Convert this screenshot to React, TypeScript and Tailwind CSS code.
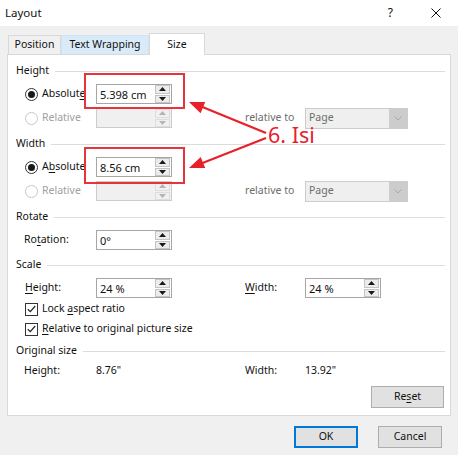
import React from "react";

function Tri({ up, disabled }: { up?: boolean; disabled?: boolean }) {
  return (
    <svg width="7" height="4" viewBox="0 0 7 4">
      <path d={up ? "M0 4 L3.5 0 L7 4 Z" : "M0 0 L3.5 4 L7 0 Z"} fill={disabled ? "#b4b4b4" : "#1a1a1a"} />
    </svg>
  );
}

function Spin({ value, disabled }: { value?: string; disabled?: boolean }) {
  return (
    <div
      className={`flex h-[20px] w-[76px] items-center border ${
        disabled ? "border-[#cccccc] bg-[#f0f0f0]" : "border-[#a6a6a6] bg-white"
      }`}
    >
      <span className="flex-1 pl-[3px] text-[11px] leading-none">{value}</span>
      <div className="mr-px flex h-[18px] w-[15px] flex-col gap-px">
        <div
          className={`grid flex-1 place-items-center border ${
            disabled ? "border-[#dedede] bg-[#f0f0f0]" : "border-[#c4c4c4] bg-[#ececec]"
          }`}
        >
          <Tri up disabled={disabled} />
        </div>
        <div
          className={`grid flex-1 place-items-center border ${
            disabled ? "border-[#dedede] bg-[#f0f0f0]" : "border-[#c4c4c4] bg-[#ececec]"
          }`}
        >
          <Tri disabled={disabled} />
        </div>
      </div>
    </div>
  );
}

function Radio({ checked, disabled }: { checked?: boolean; disabled?: boolean }) {
  return (
    <span
      className={`grid size-[13px] place-items-center rounded-full border bg-white ${
        disabled ? "border-[#c8c8c8]" : "border-[#333333]"
      }`}
    >
      {checked ? <span className="size-[7px] rounded-full bg-[#1a1a1a]" /> : null}
    </span>
  );
}

function Check() {
  return (
    <span className="grid size-[13px] place-items-center border border-[#333333] bg-white">
      <svg width="9" height="8" viewBox="0 0 9 8">
        <path d="M0.8 4.2 L3.3 6.6 L8.2 1" fill="none" stroke="#222" strokeWidth="1.2" />
      </svg>
    </span>
  );
}

function Select() {
  return (
    <div className="flex h-[21px] w-[103px] items-center border border-[#cccccc] bg-[#efefef]">
      <span className="flex-1 pl-[3px] text-[#6d6d6d]">Page</span>
      <div className="grid h-full w-[18px] place-items-center bg-[#cccccc]">
        <svg width="8" height="5" viewBox="0 0 8 5">
          <path d="M0.5 0.5 L4 4 L7.5 0.5" fill="none" stroke="#a8a8a8" strokeWidth="1" />
        </svg>
      </div>
    </div>
  );
}

function Header({ label, className }: { label: string; className: string }) {
  return (
    <div className={`flex h-[16px] items-center pl-[8px] pr-[5px] ${className}`}>
      <span>{label}</span>
      <span className="ml-[6px] h-px flex-1 bg-[#dcdcdc]" />
    </div>
  );
}

function Mn({ children }: { children: React.ReactNode }) {
  return <span className="underline decoration-1 underline-offset-[2px]">{children}</span>;
}

export default function App() {
  return (
    <div className="relative flex h-[455px] w-[458px] flex-col overflow-hidden bg-[#f0f0f0] font-['Noto_Sans',sans-serif] text-[10.5px] text-[#111]">
      {/* title bar */}
      <div className="flex h-[26px] items-center bg-white pl-[5px] pr-[17px]">
        <span className="text-[11.5px]">Layout</span>
        <span className="ml-auto text-[12px]">?</span>
        <svg className="ml-[38px]" width="10" height="10" viewBox="0 0 10 10">
          <path d="M0.5 0.5 L9.5 9.5 M9.5 0.5 L0.5 9.5" stroke="#111" strokeWidth="1" />
        </svg>
      </div>

      {/* tabs */}
      <div className="flex h-[28px] items-end pl-[8px]">
        <div className="flex h-[19px] w-[53px] items-center justify-center border border-b-0 border-[#d9d9d9]">
          Position
        </div>
        <div className="flex h-[19px] w-[88px] items-center justify-center border border-b-0 border-[#cfe3f5] bg-[#d9ebf9]">
          Text Wrapping
        </div>
        <div className="relative z-10 -mb-px flex h-[22px] w-[56px] items-center justify-center border border-b-0 border-[#d9d9d9] bg-white">
          Size
        </div>
      </div>

      {/* panel */}
      <div className="mx-[7px] flex h-[362px] flex-col border border-[#d9d9d9] bg-white pb-[7px]">
        <Header label="Height" className="mt-[8px]" />
        <div className="mt-[4px] flex h-[22px] items-center pl-[17px]">
          <Radio checked />
          <span className="ml-[4px] w-[54px]">
            Absolut<Mn>e</Mn>
          </span>
          <Spin value="5.398 cm" />
        </div>
        <div className="mt-[2px] flex h-[22px] items-center pl-[17px]">
          <Radio disabled />
          <span className="ml-[4px] w-[54px] text-[#a0a0a0]">Relative</span>
          <Spin disabled />
          <span className="ml-[73px] w-[60px] text-[#6d6d6d]">relative to</span>
          <Select />
        </div>

        <Header label="Width" className="mt-[7px]" />
        <div className="mt-[4px] flex h-[22px] items-center pl-[17px]">
          <Radio checked />
          <span className="ml-[4px] w-[54px]">
            A<Mn>b</Mn>solute
          </span>
          <Spin value="8.56 cm" />
        </div>
        <div className="mt-[2px] flex h-[22px] items-center pl-[17px]">
          <Radio disabled />
          <span className="ml-[4px] w-[54px] text-[#a0a0a0]">Relative</span>
          <Spin disabled />
          <span className="ml-[73px] w-[60px] text-[#6d6d6d]">relative to</span>
          <Select />
        </div>

        <Header label="Rotate" className="mt-[7px]" />
        <div className="mt-[4px] flex h-[22px] items-center pl-[16px]">
          <span className="w-[72px]">
            Ro<Mn>t</Mn>ation:
          </span>
          <Spin value="0°" />
        </div>

        <Header label="Scale" className="mt-[6px]" />
        <div className="mt-[4px] flex h-[22px] items-center pl-[17px]">
          <span className="w-[71px]">
            <Mn>H</Mn>eight:
          </span>
          <Spin value="24 %" />
          <span className="ml-[73px] w-[60px]">
            <Mn>W</Mn>idth:
          </span>
          <Spin value="24 %" />
        </div>
        <div className="mt-px flex h-[18px] items-center pl-[17px]">
          <Check />
          <span className="ml-[4px]">
            Lock <Mn>a</Mn>spect ratio
          </span>
        </div>
        <div className="mt-[2px] flex h-[18px] items-center pl-[17px]">
          <Check />
          <span className="ml-[4px]">
            <Mn>R</Mn>elative to original picture size
          </span>
        </div>

        <Header label="Original size" className="mt-[5px]" />
        <div className="mt-[3px] flex h-[18px] items-center pl-[16px]">
          <span className="w-[72px]">Height:</span>
          <span className="w-[149px]">8.76"</span>
          <span className="w-[60px]">Width:</span>
          <span>13.92"</span>
        </div>
        <div className="mt-[6px] flex justify-end pr-[6px]">
          <button className="h-[22px] w-[73px] border border-[#adadad] bg-[#e1e1e1]">
            Re<Mn>s</Mn>et
          </button>
        </div>
      </div>

      {/* footer buttons */}
      <div className="mt-[10px] flex justify-end gap-[20px] pr-[16px]">
        <button className="h-[22px] w-[64px] border-2 border-[#0078d7] bg-[#e1e1e1]">OK</button>
        <button className="h-[22px] w-[64px] border border-[#adadad] bg-[#e1e1e1]">Cancel</button>
      </div>

      {/* annotation overlay */}
      <div className="pointer-events-none absolute left-[84px] top-[73px] h-[36px] w-[101px] border-2 border-[#e5343a]" />
      <div className="pointer-events-none absolute left-[84px] top-[147px] h-[37px] w-[101px] border-2 border-[#e5343a]" />
      <svg className="pointer-events-none absolute left-0 top-0" width="458" height="455" viewBox="0 0 458 455">
        <path d="M266 133 L200 106" stroke="#e8202a" strokeWidth="2.2" />
        <path d="M189 102 L200.6 113.3 L205.2 102.1 Z" fill="#e8202a" />
        <path d="M266 138 L200 164" stroke="#e8202a" strokeWidth="2.2" />
        <path d="M189 168 L205.2 168.1 L200.7 156.9 Z" fill="#e8202a" />
      </svg>
      <span className="pointer-events-none absolute left-[268px] top-[127px] text-[21.5px] leading-[16px] text-[#e8202a]">
        6. Isi
      </span>
    </div>
  );
}
